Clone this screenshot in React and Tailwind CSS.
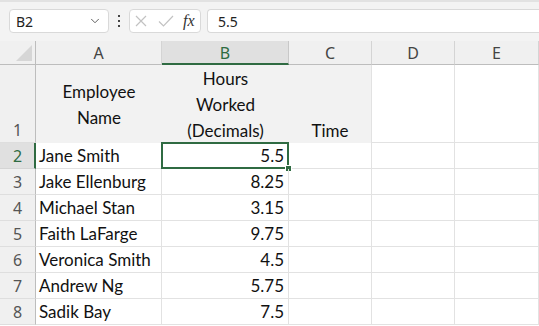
import { ChevronDown } from 'lucide-react'

const cols = [
  { key: 'A', w: 'w-[126px]' },
  { key: 'B', w: 'w-[127px]' },
  { key: 'C', w: 'w-[83px]' },
  { key: 'D', w: 'w-[83px]' },
  { key: 'E', w: 'w-[84px]' },
]

const rows = [
  ['Jane Smith', '5.5'],
  ['Jake Ellenburg', '8.25'],
  ['Michael Stan', '3.15'],
  ['Faith LaFarge', '9.75'],
  ['Veronica Smith', '4.5'],
  ['Andrew Ng', '5.75'],
  ['Sadik Bay', '7.5'],
]

const uiFont = { fontFamily: '"Noto Sans", "Open Sans", sans-serif' }
const cellFont = { fontFamily: 'Lato, "Liberation Sans", sans-serif' }

const FormulaBar = () => (
  <div className="flex h-[41px] items-start border-t-2 border-[#e2e2e2] bg-[#f3f3f3] pt-[7px]" style={uiFont}>
    <div className="ml-[9px] flex h-[24px] w-[100px] items-center justify-between rounded border border-[#d9d9d9] bg-white px-[6px] text-[14px] text-[#222]">
      <span>B2</span>
      <ChevronDown size={14} strokeWidth={1.6} className="text-[#555]" />
    </div>
    <div className="mx-[9px] flex h-[24px] flex-col items-center justify-center gap-[3px]">
      <span className="block h-[2px] w-[2px] bg-[#444]" />
      <span className="block h-[2px] w-[2px] bg-[#444]" />
      <span className="block h-[2px] w-[2px] bg-[#444]" />
    </div>
    <div className="flex h-[24px] w-[72px] items-center rounded border border-[#d9d9d9] bg-white pl-[2px]">
      <svg width="16" height="16" viewBox="0 0 16 16" className="ml-[1px]">
        <path d="M3 3 L13 13 M13 3 L3 13" stroke="#c2c2c2" strokeWidth="1.2" fill="none" />
      </svg>
      <svg width="18" height="16" viewBox="0 0 18 16" className="ml-[8px]">
        <path d="M2 8.5 L6.5 13 L16 3" stroke="#c2c2c2" strokeWidth="1.2" fill="none" />
      </svg>
      <span
        className="ml-[8px] text-[16px] italic text-[#333]"
        style={{ fontFamily: '"Liberation Serif", serif' }}
      >
        fx
      </span>
    </div>
    <div className="ml-[6px] flex h-[24px] flex-1 items-center rounded-l border border-r-0 border-[#d9d9d9] bg-white pl-[10px] text-[14px] text-[#222]">
      5.5
    </div>
  </div>
)

const HeaderRow = () => (
  <div className="flex h-[24px] bg-[#f0f0f0]" style={uiFont}>
    <div className="flex w-[36px] items-end justify-end border-r border-b border-[#bdbdbd] pb-[3px] pr-[3px]">
      <svg width="16" height="16" viewBox="0 0 16 16">
        <path d="M16 0 L16 16 L0 16 Z" fill="#d6d6d6" />
      </svg>
    </div>
    {cols.map((c) =>
      c.key === 'B' ? (
        <div
          key={c.key}
          className={`${c.w} flex items-center justify-center border-r border-b-2 border-r-[#c8c8c8] border-b-[#2f6b42] bg-[#e0e0e0] pt-[2px] text-[16px] text-[#2f6b42]`}
        >
          {c.key}
        </div>
      ) : (
        <div
          key={c.key}
          className={`${c.w} flex items-center justify-center border-r border-b border-r-[#d4d4d4] border-b-[#bdbdbd] pt-[1px] text-[16px] text-[#444]`}
        >
          {c.key}
        </div>
      )
    )}
  </div>
)

const RowHeader = ({ n, selected, tall }) => (
  <div
    className={`${tall ? 'h-[78px] items-end' : 'h-[26px] items-center pt-[1px]'} flex w-[36px] shrink-0 justify-center border-b text-[16px] ${
      selected
        ? 'border-r-2 border-r-[#2f6b42] border-b-[#d4d4d4] bg-[#e0e0e0] pl-[1px] text-[#2f6b42]'
        : 'border-r border-r-[#bdbdbd] border-b-[#dedede] bg-[#f0f0f0] text-[#555]'
    }`}
    style={uiFont}
  >
    {n}
  </div>
)

const TitleRow = () => (
  <div className="flex h-[78px]" style={cellFont}>
    <RowHeader n={1} tall />
    <div className="flex w-[126px] items-center justify-center bg-[#f2f2f2] pt-[2px] text-center text-[17px] leading-[26px] text-[#111]">
      <span>
        Employee
        <br />
        Name
      </span>
    </div>
    <div className="flex w-[127px] items-end justify-center bg-[#f2f2f2] text-center text-[17px] leading-[26px] text-[#111]">
      <span className="translate-y-[1px]">
        Hours
        <br />
        Worked
        <br />
        (Decimals)
      </span>
    </div>
    <div className="flex w-[83px] items-end justify-center border-r border-[#e2e2e2] bg-[#f2f2f2] text-[17px] leading-[26px] text-[#111]">
      <span className="translate-y-[1px]">Time</span>
    </div>
    <div className="w-[83px] border-r border-b border-[#e2e2e2]" />
    <div className="w-[84px] border-r border-b border-[#e2e2e2]" />
  </div>
)

const DataRow = ({ n, name, hours }) => {
  const selected = n === 2
  return (
    <div className="flex h-[26px]" style={cellFont}>
      <RowHeader n={n} selected={selected} />
      <div className="flex w-[126px] items-center border-r border-b border-[#e2e2e2] pl-[3px] pt-[1px] text-[17px] leading-[24px] text-[#111]">
        {name}
      </div>
      <div className="relative flex w-[127px] items-center justify-end border-r border-b border-[#e2e2e2] pr-[4px] pt-[1px] text-[17px] leading-[24px] text-[#111]">
        {hours}
        {selected && (
          <>
            <div className="absolute -top-[1px] -left-[1px] -right-[1px] -bottom-[1px] border-2 border-[#2f6b42]" />
            <div className="absolute -right-[4px] -bottom-[4px] h-[7px] w-[7px] border border-white bg-[#2f6b42]" />
          </>
        )}
      </div>
      <div className="w-[83px] border-r border-b border-[#e2e2e2]" />
      <div className="w-[83px] border-r border-b border-[#e2e2e2]" />
      <div className="w-[84px] border-r border-b border-[#e2e2e2]" />
    </div>
  )
}

export default function App() {
  return (
    <div className="h-[326px] w-[539px] overflow-hidden bg-white">
      <FormulaBar />
      <HeaderRow />
      <TitleRow />
      {rows.map(([name, hours], i) => (
        <DataRow key={name} n={i + 2} name={name} hours={hours} />
      ))}
    </div>
  )
}
